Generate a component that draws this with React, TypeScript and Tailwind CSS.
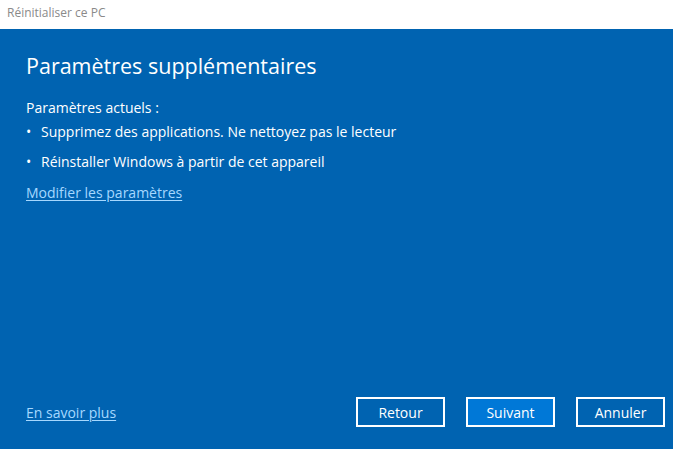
export default function App() {
  return (
    <div
      className="w-[673px] h-[449px] flex flex-col bg-[#0063b1] text-white overflow-hidden"
      style={{ fontFamily: '"Segoe UI", "Open Sans", sans-serif' }}
    >
      {/* title bar */}
      <div className="h-[29px] bg-white text-[#8a8a8a] text-[12px] flex items-center pl-[7px] pb-[4px]">
        Réinitialiser ce PC
      </div>

      <div className="flex-1 flex flex-col px-[26px] pt-[21px]">
        <h1 className="text-[21.5px] leading-[32px] font-normal">Paramètres supplémentaires</h1>

        <div className="mt-[16px] text-[14px] leading-[20px]">
          <p>Paramètres actuels :</p>
          <ul className="mt-[4px] flex flex-col gap-[10px]">
            <li className="flex">
              <span className="w-[15px]">•</span>
              <span>Supprimez des applications. Ne nettoyez pas le lecteur</span>
            </li>
            <li className="flex">
              <span className="w-[15px]">•</span>
              <span>Réinstaller Windows à partir de cet appareil</span>
            </li>
          </ul>
          <a href="#" className="block mt-[11px] text-[#a6d8ff] underline underline-offset-2">
            Modifier les paramètres
          </a>
        </div>

        <div className="mt-auto mb-[22px] flex items-center">
          <a href="#" className="text-[14px] text-[#a6d8ff] underline underline-offset-2">
            En savoir plus
          </a>
          <div className="ml-auto flex gap-[21px] mr-[-18px]">
            <button className="w-[89px] h-[30px] border-2 border-white text-[14px]">Retour</button>
            <button className="w-[89px] h-[30px] border-2 border-white bg-[#0078d7] text-[14px]">Suivant</button>
            <button className="w-[89px] h-[30px] border-2 border-white text-[14px]">Annuler</button>
          </div>
        </div>
      </div>
    </div>
  );
}
